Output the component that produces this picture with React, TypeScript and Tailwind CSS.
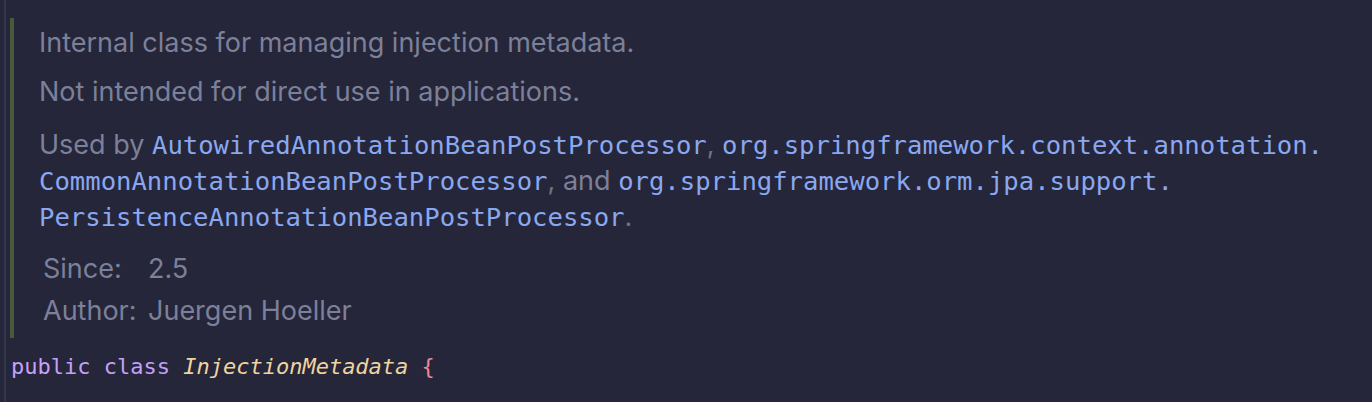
import React from "react";

export default function App() {
  return (
    <div className="w-full h-[402px] bg-[#25263a] flex overflow-hidden">
      <div className="w-[4px] shrink-0" />
      <div className="w-[2px] shrink-0 bg-[#33354a]" />
      <div className="flex-1 flex flex-col pt-[18px]">
        <div className="ml-[4px] border-l-4 border-[#4a5a3d] pl-[25px] pt-[8px] pb-[6px] text-[27px] text-[#7c8099] font-['Inter',sans-serif]">
          <p className="leading-[34px]">Internal class for managing injection metadata.</p>
          <p className="leading-[34px] mt-[15px]">Not intended for direct use in applications.</p>
          <p className="leading-[35px] mt-[18px]">
            Used by{" "}
            <span className="font-['DejaVu_Sans_Mono',monospace] text-[25.6px] text-[#8aa8f0]">AutowiredAnnotationBeanPostProcessor</span>
            <span className="text-[#6e7289]">,</span>{" "}
            <span className="font-['DejaVu_Sans_Mono',monospace] text-[25.6px] text-[#8aa8f0]">
              org.springframework.context.annotation.
              <br />
              CommonAnnotationBeanPostProcessor
            </span>
            <span className="text-[#6e7289]">,</span> and{" "}
            <span className="font-['DejaVu_Sans_Mono',monospace] text-[25.6px] text-[#8aa8f0]">
              org.springframework.orm.jpa.support.
              <br />
              PersistenceAnnotationBeanPostProcessor
            </span>
            <span className="text-[#6e7289]">.</span>
          </p>
          <div className="mt-[13px] pl-[4px] grid grid-cols-[105px_1fr] leading-[42px]">
            <span>Since:</span>
            <span>2.5</span>
            <span>Author:</span>
            <span>Juergen Hoeller</span>
          </div>
        </div>
        <div className="mt-[14px] pl-[5px] leading-[30px] text-[22px] font-['DejaVu_Sans_Mono',monospace] whitespace-pre">
          <span className="text-[#c6a0f6]">public class </span>
          <span className="italic text-[#eed49f]">InjectionMetadata </span>
          <span className="text-[#ed8796]">{"{"}</span>
        </div>
      </div>
    </div>
  );
}
